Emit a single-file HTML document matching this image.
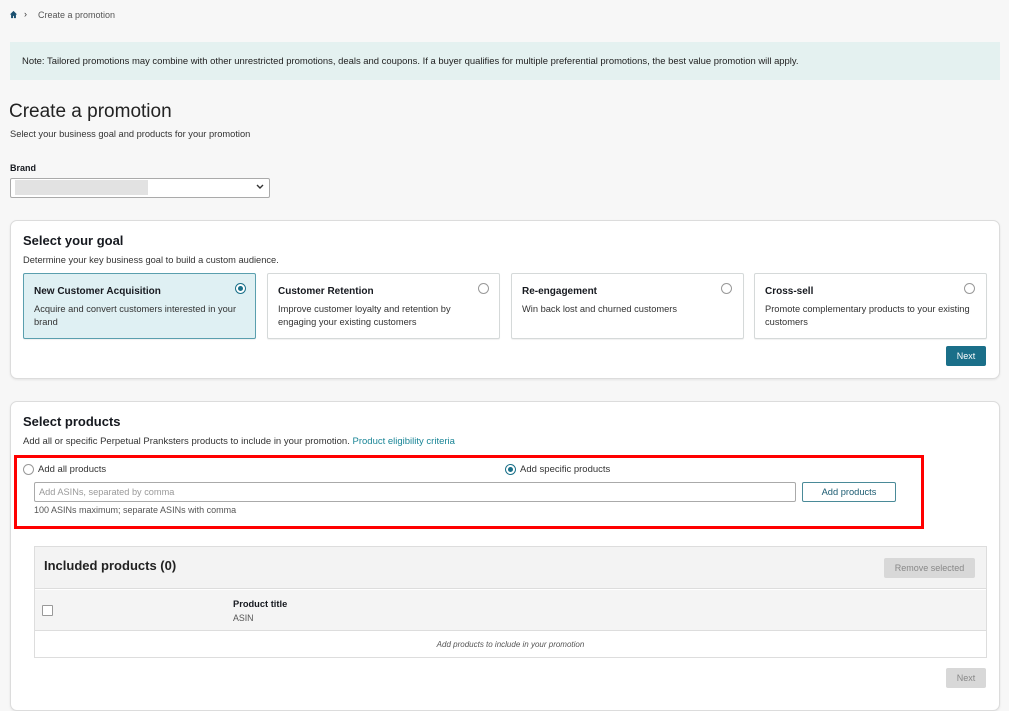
<!DOCTYPE html>
<html><head><style>
*{box-sizing:border-box;margin:0;padding:0}
body{width:1009px;height:695px;overflow:hidden;background:#f7f7f7;font-family:"Liberation Sans",sans-serif;color:#16191f;position:relative;font-size:9px}
.a{position:absolute;white-space:nowrap}
.card{position:absolute;background:#fff;border:1px solid #dcdcdc;border-radius:7px;box-shadow:0 1px 2px rgba(0,0,0,.08)}
.gc{position:absolute;top:273px;width:233px;height:66px;background:#fff;border:1px solid #d5d9d9;border-radius:2px;box-shadow:0 1px 1px rgba(0,0,0,.06)}
.gc b{position:absolute;left:10px;top:12px;font-size:10px}
.gc span{position:absolute;left:10px;top:29px;font-size:9.3px;line-height:13px;color:#333;white-space:normal;width:212px}
.rd{position:absolute;width:11px;height:11px;border:1px solid #999;border-radius:50%;background:#fff}
.rd.on{border-color:#1a7089}
.rd.on:after{content:"";position:absolute;left:2px;top:2px;width:5px;height:5px;border-radius:50%;background:#1a7089}
</style></head><body>
<svg class="a" style="left:9px;top:10px" width="9" height="9" viewBox="0 0 10 10"><path d="M5 1L1 5h1.3v4h2.2V6.5h1V9h2.2V5H9z" fill="#1a5070"/></svg>
<div class="a" style="left:24px;top:9px;font-size:9px;color:#333">›</div>
<div class="a" style="left:38px;top:10px;font-size:9px;color:#555">Create a promotion</div>
<div class="a" style="left:10px;top:42px;width:990px;height:38px;background:#e4f1f0"></div>
<div class="a" style="left:22px;top:56px;font-size:9.45px;color:#222">Note: Tailored promotions may combine with other unrestricted promotions, deals and coupons. If a buyer qualifies for multiple preferential promotions, the best value promotion will apply.</div>
<div class="a" style="left:9px;top:101px;font-size:19px;color:#222">Create a promotion</div>
<div class="a" style="left:10px;top:129px;font-size:9.3px;color:#333">Select your business goal and products for your promotion</div>
<div class="a" style="left:10px;top:163px;font-size:9px;font-weight:bold">Brand</div>
<div class="a" style="left:10px;top:178px;width:260px;height:20px;background:#fff;border:1px solid #aaa;border-radius:2px"></div>
<div class="a" style="left:15px;top:180px;width:133px;height:15px;background:#e2e2e2"></div>
<svg class="a" style="left:256px;top:184px" width="8" height="6" viewBox="0 0 8 6"><path d="M1 1l3 3 3-3" stroke="#333" stroke-width="1.4" fill="none"/></svg>

<div class="card" style="left:10px;top:220px;width:990px;height:159px"></div>
<div class="a" style="left:23px;top:233px;font-size:13px;font-weight:bold">Select your goal</div>
<div class="a" style="left:23px;top:255px;font-size:9.3px;color:#333">Determine your key business goal to build a custom audience.</div>
<div class="gc" style="left:23px;background:#dff0f3;border-color:#5a9fae"><b>New Customer Acquisition</b><span>Acquire and convert customers interested in your brand</span></div>
<div class="rd on" style="left:235px;top:283px"></div>
<div class="gc" style="left:267px"><b>Customer Retention</b><span style="width:195px">Improve customer loyalty and retention by engaging your existing customers</span></div>
<div class="rd" style="left:478px;top:283px"></div>
<div class="gc" style="left:511px"><b>Re-engagement</b><span>Win back lost and churned customers</span></div>
<div class="rd" style="left:721px;top:283px"></div>
<div class="gc" style="left:754px"><b>Cross-sell</b><span>Promote complementary products to your existing customers</span></div>
<div class="rd" style="left:964px;top:283px"></div>
<div class="a" style="left:946px;top:346px;width:40px;height:20px;background:#1a6f89;color:#fff;font-size:9px;text-align:center;line-height:20px;border-radius:2px">Next</div>

<div class="card" style="left:10px;top:401px;width:990px;height:310px"></div>
<div class="a" style="left:23px;top:414px;font-size:13px;font-weight:bold">Select products</div>
<div class="a" style="left:23px;top:436px;font-size:9.5px;color:#333">Add all or specific Perpetual Pranksters products to include in your promotion. <span style="color:#1a8596">Product eligibility criteria</span></div>
<div class="a" style="left:14px;top:455px;width:910px;height:74px;border:3px solid #f00"></div>
<div class="rd" style="left:23px;top:464px"></div>
<div class="a" style="left:38px;top:464px;font-size:9.5px;color:#333">Add all products</div>
<div class="rd on" style="left:505px;top:464px"></div>
<div class="a" style="left:520px;top:464px;font-size:9.5px;color:#333">Add specific products</div>
<div class="a" style="left:34px;top:482px;width:762px;height:20px;background:#fff;border:1px solid #aaa;border-radius:2px"></div>
<div class="a" style="left:39px;top:487px;font-size:9.2px;color:#999">Add ASINs, separated by comma</div>
<div class="a" style="left:802px;top:482px;width:94px;height:20px;background:#fff;border:1px solid #4a8a98;border-radius:2px;font-size:9.3px;color:#1a5a70;text-align:center;line-height:18px">Add products</div>
<div class="a" style="left:34px;top:505px;font-size:9px;color:#555">100 ASINs maximum; separate ASINs with comma</div>

<div class="a" style="left:34px;top:546px;width:953px;height:112px;border:1px solid #ddd;background:#fff"></div>
<div class="a" style="left:35px;top:547px;width:951px;height:42px;background:#f3f3f3;border-bottom:1px solid #ddd"></div>
<div class="a" style="left:44px;top:558px;font-size:13px;font-weight:bold;color:#222">Included products (0)</div>
<div class="a" style="left:884px;top:558px;width:91px;height:20px;background:#d8d8d8;color:#888;font-size:9px;text-align:center;line-height:20px;border-radius:2px">Remove selected</div>
<div class="a" style="left:35px;top:590px;width:951px;height:41px;background:#f4f4f4;border-bottom:1px solid #ddd"></div>
<div class="a" style="left:42px;top:605px;width:11px;height:11px;border:1px solid #999;background:#fff;border-radius:1px"></div>
<div class="a" style="left:233px;top:599px;font-size:9.3px;font-weight:bold">Product title</div>
<div class="a" style="left:233px;top:613px;font-size:8.8px;color:#555">ASIN</div>
<div class="a" style="left:35px;top:640px;width:951px;text-align:center;font-size:8px;font-style:italic;color:#555">Add products to include in your promotion</div>
<div class="a" style="left:946px;top:668px;width:40px;height:20px;background:#d8d8d8;color:#888;font-size:9px;text-align:center;line-height:20px;border-radius:2px">Next</div>
</body></html>
